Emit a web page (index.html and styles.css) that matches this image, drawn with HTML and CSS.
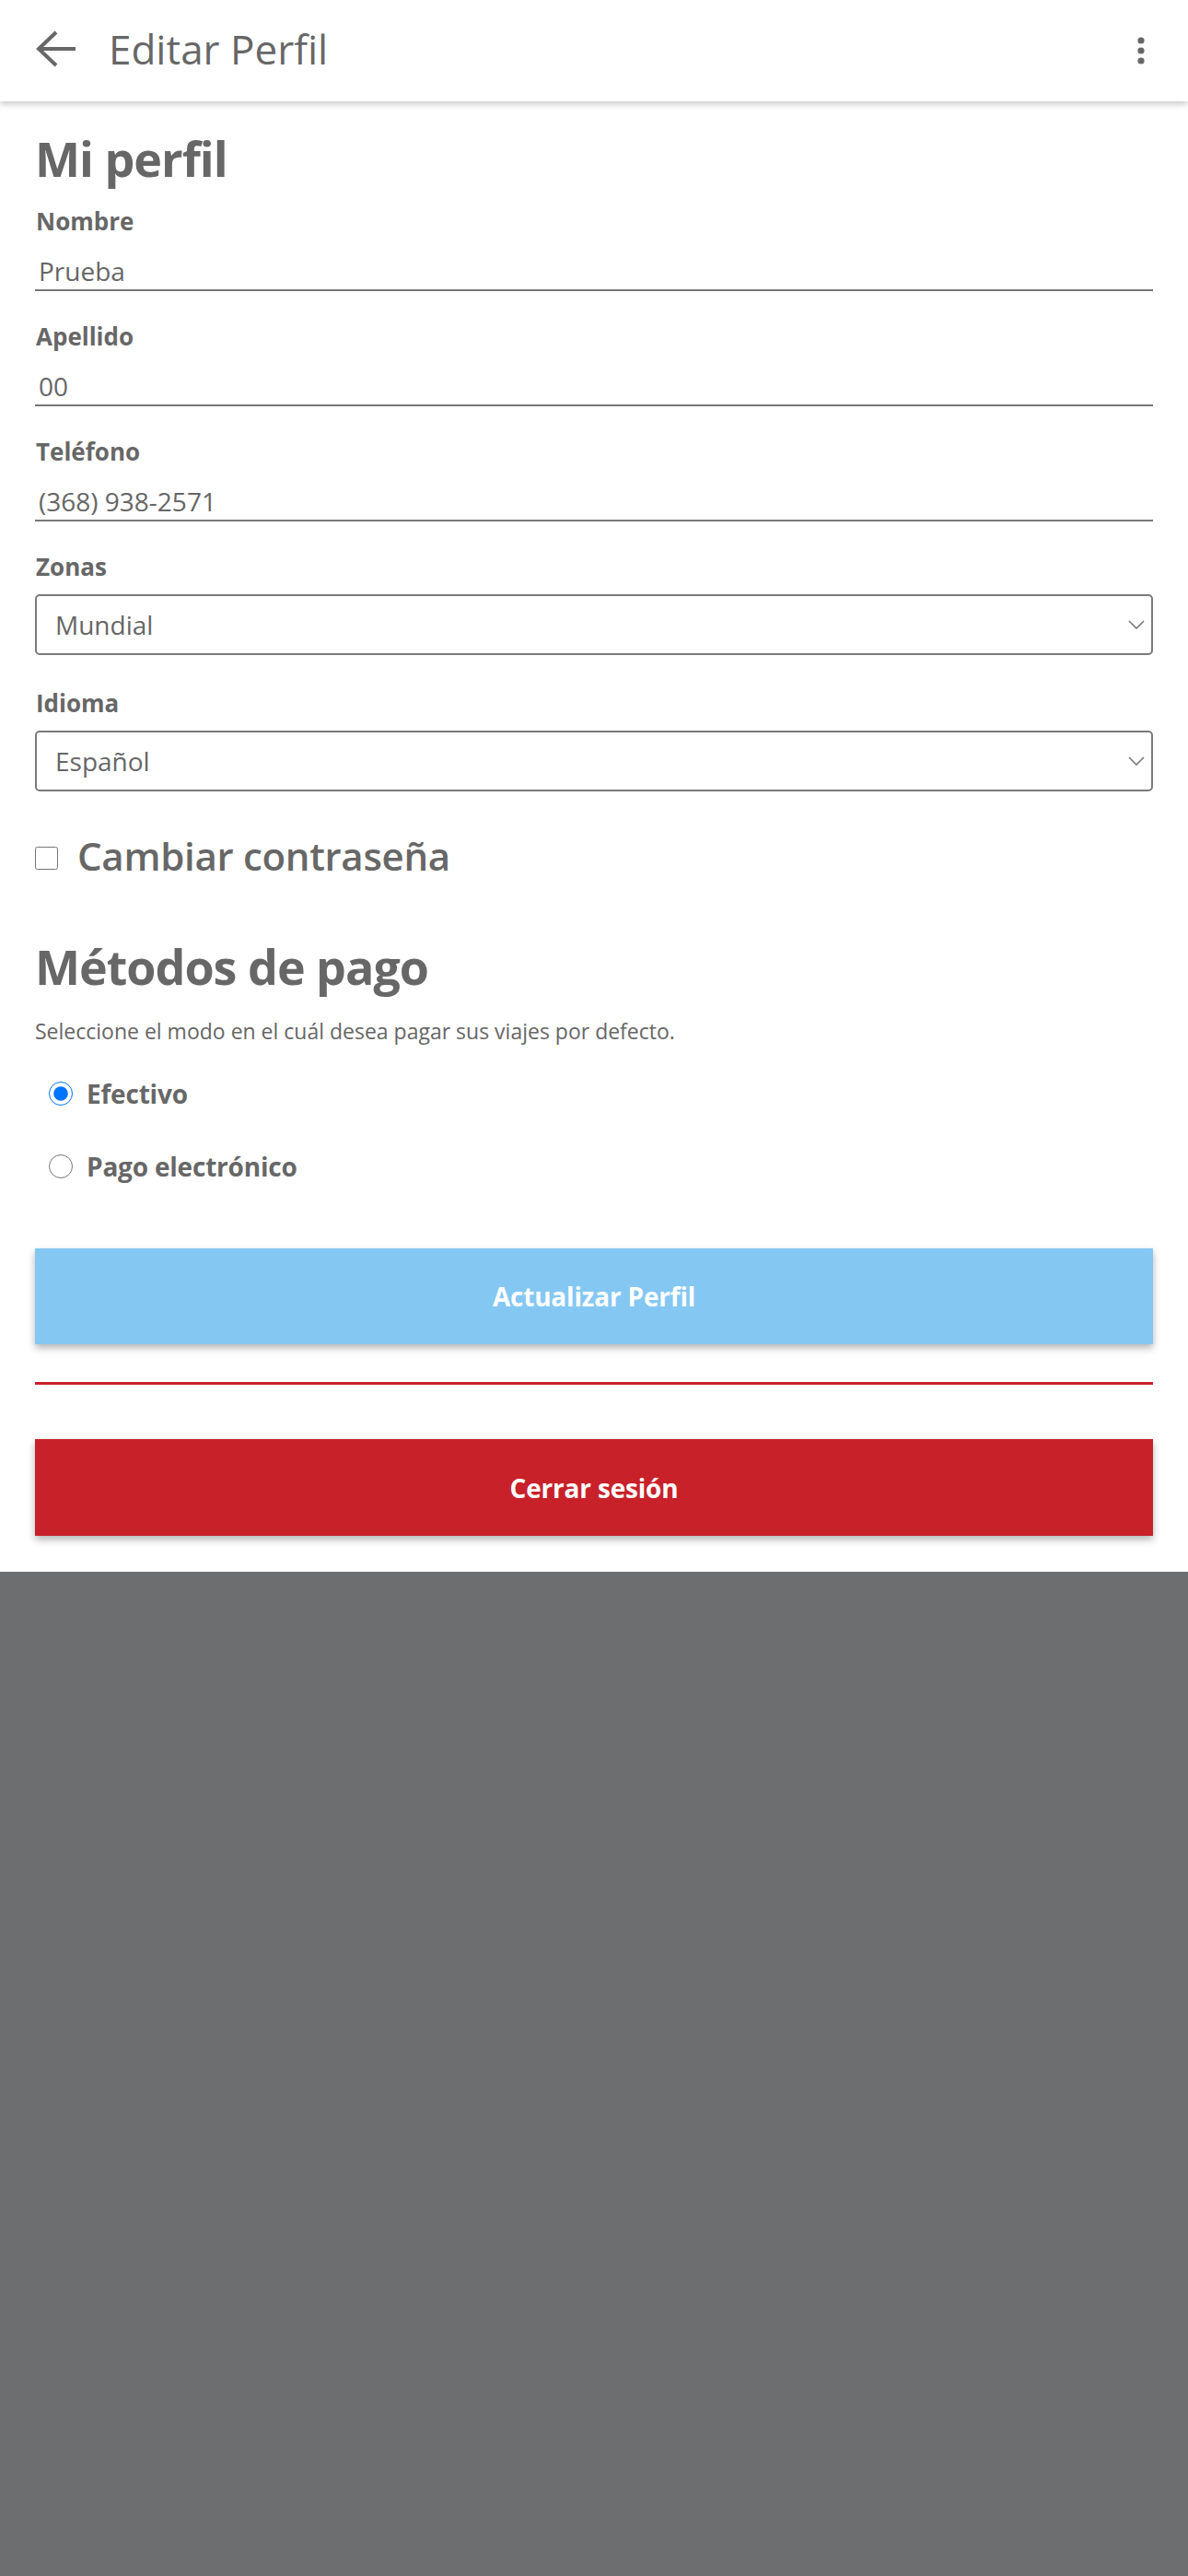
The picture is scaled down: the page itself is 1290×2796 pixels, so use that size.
FILE: index.html
```html
<!DOCTYPE html>
<html lang="es">
<head>
    <meta charset="UTF-8">
    <meta name="viewport" content="width=device-width, initial-scale=1.0">
    <title>Editar Perfil</title>
    <link rel="stylesheet" href="styles.css">
</head>
<body>
    <div class="screen">
        <header class="topbar">
            <a class="topbar-back" id="btn-back">
                <svg width="48" height="48" viewBox="0 0 48 48">
                    <path d="M44 21H5M23 3L4 21l19 18" fill="none" stroke="#676767" stroke-width="4"/>
                </svg>
            </a>
            <h1 class="topbar-title">Editar Perfil</h1>
            <a class="topbar-menu" id="btn-menu">
                <svg width="12" height="36" viewBox="0 0 12 36">
                    <circle cx="6" cy="7" r="3.6" fill="#676767"/>
                    <circle cx="6" cy="18" r="3.6" fill="#676767"/>
                    <circle cx="6" cy="29" r="3.6" fill="#676767"/>
                </svg>
            </a>
        </header>

        <main class="profile">
            <h2 class="section-title">Mi perfil</h2>

            <div class="field">
                <label for="nombre">Nombre</label>
                <input id="nombre" class="line-input" type="text" value="Prueba">
            </div>

            <div class="field">
                <label for="apellido">Apellido</label>
                <input id="apellido" class="line-input" type="text" value="00">
            </div>

            <div class="field">
                <label for="telefono">Teléfono</label>
                <input id="telefono" class="line-input" type="tel" value="(368) 938-2571">
            </div>

            <div class="field select-field">
                <label for="zonas">Zonas</label>
                <div class="select-wrap">
                    <select id="zonas">
                        <option>Mundial</option>
                    </select>
                    <svg class="select-arrow" width="18" height="10" viewBox="0 0 18 10">
                        <path d="M1 1l8 8 8-8" fill="none" stroke="#777" stroke-width="1.6"/>
                    </svg>
                </div>
            </div>

            <div class="field select-field">
                <label for="idioma">Idioma</label>
                <div class="select-wrap">
                    <select id="idioma">
                        <option>Español</option>
                    </select>
                    <svg class="select-arrow" width="18" height="10" viewBox="0 0 18 10">
                        <path d="M1 1l8 8 8-8" fill="none" stroke="#777" stroke-width="1.6"/>
                    </svg>
                </div>
            </div>

            <label class="password-toggle">
                <input type="checkbox" id="cambiar">
                <span>Cambiar contraseña</span>
            </label>

            <h2 class="section-title payment-title">Métodos de pago</h2>
            <p class="hint">Seleccione el modo en el cuál desea pagar sus viajes por defecto.</p>

            <label class="radio-row">
                <input type="radio" name="pago" value="efectivo" checked>
                <span>Efectivo</span>
            </label>
            <label class="radio-row">
                <input type="radio" name="pago" value="electronico">
                <span>Pago electrónico</span>
            </label>

            <button class="btn btn-update" type="button">Actualizar Perfil</button>
            <hr class="divider">
            <button class="btn btn-logout" type="button">Cerrar sesión</button>
        </main>
    </div>
</body>
</html>
```

FILE: styles.css
```css
body, html {
    margin: 0;
    padding: 0;
    height: 100%;
    font-family: "Open Sans", "Noto Sans", sans-serif;
}

body {
    background-color: #6d6e70;
    color: #666;
}

.screen {
    background-color: #fff;
}

.topbar {
    display: flex;
    align-items: center;
    height: 110px;
    padding: 0 45px 4px 38px;
    box-sizing: border-box;
    background-color: #fff;
    box-shadow: 0 3px 7px rgba(0, 0, 0, .22);
    position: relative;
}

.topbar-back {
    display: flex;
    width: 48px;
    height: 48px;
    cursor: pointer;
    margin-top: 6px;
}

.topbar-title {
    flex: 1;
    margin: 0 0 0 32px;
    font-size: 44px;
    line-height: 60px;
    font-weight: 400;
    color: #676767;
}

.topbar-menu {
    display: flex;
    cursor: pointer;
    margin-top: 4px;
}

.profile {
    padding: 0 38px 39px;
}

.section-title {
    margin: 32px 0 0;
    font-size: 52px;
    line-height: 60px;
    font-weight: 700;
    letter-spacing: -1px;
    color: #676767;
}

.field {
    display: flex;
    flex-direction: column;
    margin-top: 33px;
}

.section-title + .field {
    margin-top: 22px;
}

.select-field + .select-field {
    margin-top: 36px;
}

.field label {
    font-size: 26px;
    line-height: 32px;
    font-weight: 700;
    color: #676767;
    padding-left: 1px;
}

.line-input {
    margin-top: 20px;
    height: 40px;
    padding: 0 0 2px 4px;
    font-family: inherit;
    font-size: 28px;
    line-height: 36px;
    color: #666;
    border: none;
    border-bottom: 2px solid #777;
    outline: none;
    box-sizing: border-box;
    width: 100%;
    background: transparent;
}

.select-wrap {
    position: relative;
    margin-top: 14px;
}

.select-wrap select {
    -webkit-appearance: none;
    appearance: none;
    width: 100%;
    height: 66px;
    padding: 0 40px 0 20px;
    font-family: inherit;
    font-size: 28px;
    line-height: 36px;
    color: #666;
    background-color: #fff;
    border: 2px solid #7a7a7a;
    border-radius: 5px;
    outline: none;
    box-sizing: border-box;
}

.select-arrow {
    position: absolute;
    right: 9px;
    top: 28px;
    pointer-events: none;
}

.password-toggle {
    display: flex;
    align-items: center;
    margin-top: 42px;
    font-size: 42px;
    line-height: 56px;
    font-weight: 600;
    letter-spacing: -0.3px;
    color: #676767;
    cursor: pointer;
}

.password-toggle input {
    width: 25px;
    height: 25px;
    margin: 4px 21px 0 0;
}

.payment-title {
    margin-top: 62px;
}

.hint {
    margin: 24px 0 0;
    font-size: 23px;
    line-height: 32px;
    color: #666;
}

.radio-row {
    display: flex;
    align-items: center;
    padding-left: 15px;
    margin-top: 43px;
    font-size: 28px;
    line-height: 36px;
    font-weight: 700;
    letter-spacing: -0.2px;
    color: #676767;
    cursor: pointer;
}

.hint + .radio-row {
    margin-top: 34px;
}

.radio-row input {
    width: 26px;
    height: 26px;
    margin: 0 15px 0 0;
}

.btn {
    display: block;
    width: 100%;
    border: none;
    font-family: inherit;
    font-size: 28px;
    font-weight: 700;
    letter-spacing: -0.2px;
    color: #fff;
    cursor: pointer;
    box-shadow: 0 4px 8px rgba(0, 0, 0, .3);
}

.btn-update {
    margin-top: 71px;
    height: 104px;
    background-color: #84c7f2;
}

.divider {
    margin: 41px 0 0;
    border: none;
    height: 3px;
    background-color: #c8202a;
}

.btn-logout {
    margin-top: 59px;
    height: 105px;
    background-color: #c8212a;
}
```
